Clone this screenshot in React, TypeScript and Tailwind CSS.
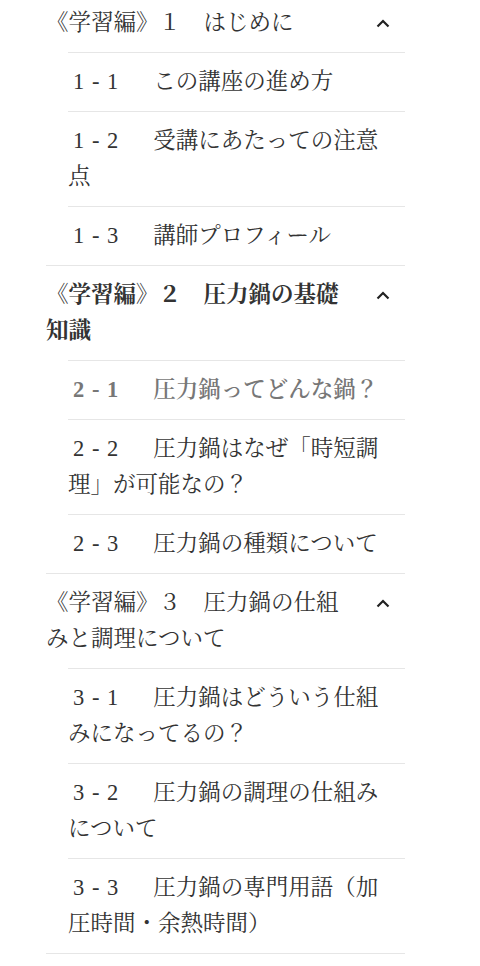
import React from "react";

type Sub = { num: string; text: string; active?: boolean };
type Section = { num: string; title: string; bold?: boolean; subs: Sub[] };

const sections: Section[] = [
  {
    num: "１",
    title: "はじめに",
    subs: [
      { num: "1 - 1", text: "この講座の進め方" },
      { num: "1 - 2", text: "受講にあたっての注意点" },
      { num: "1 - 3", text: "講師プロフィール" },
    ],
  },
  {
    num: "２",
    title: "圧力鍋の基礎知識",
    bold: true,
    subs: [
      { num: "2 - 1", text: "圧力鍋ってどんな鍋？", active: true },
      { num: "2 - 2", text: "圧力鍋はなぜ「時短調理」が可能なの？" },
      { num: "2 - 3", text: "圧力鍋の種類について" },
    ],
  },
  {
    num: "３",
    title: "圧力鍋の仕組みと調理について",
    subs: [
      { num: "3 - 1", text: "圧力鍋はどういう仕組みになってるの？" },
      { num: "3 - 2", text: "圧力鍋の調理の仕組みについて" },
      { num: "3 - 3", text: "圧力鍋の専門用語（加圧時間・余熱時間）" },
    ],
  },
];

const font = {
  fontFamily:
    '"Liberation Serif", "Noto Serif CJK JP", "Noto Sans CJK JP", serif',
};

function Chevron() {
  return (
    <svg width="14" height="9" viewBox="0 0 14 9" className="mt-[14px] shrink-0">
      <polyline
        points="1.5,7.5 7,2 12.5,7.5"
        fill="none"
        stroke="#222"
        strokeWidth="2.2"
      />
    </svg>
  );
}

export default function App() {
  return (
    <div className="min-h-[966px] bg-white overflow-hidden" style={font}>
      <div className="ml-[46px] w-[359px] -mt-[6px] border-b border-[#e6e6e6] text-[#333] text-[22.5px] leading-[36px]">
        {sections.map((s, i) => (
          <div key={i} className={i === 0 ? "" : "border-t border-[#e6e6e6]"}>
            <div className="flex items-start gap-[26px] py-[11px] pr-[15px]">
              <div className={"flex-1 " + (s.bold ? "font-bold" : "font-normal")}>
                《学習編》{s.num}　{s.title}
              </div>
              <Chevron />
            </div>
            <div className="ml-[22px]">
              {s.subs.map((sub, j) => (
                <div
                  key={j}
                  className={
                    "border-t border-[#e6e6e6] py-[11px] pr-[15px] " +
                    (sub.active ? "text-[#777] font-semibold" : "")
                  }
                >
                  <span className="pl-[5px] pr-[34px] tracking-[1px]">
                    {sub.num}
                  </span>
                  {sub.text}
                </div>
              ))}
            </div>
          </div>
        ))}
      </div>
    </div>
  );
}
